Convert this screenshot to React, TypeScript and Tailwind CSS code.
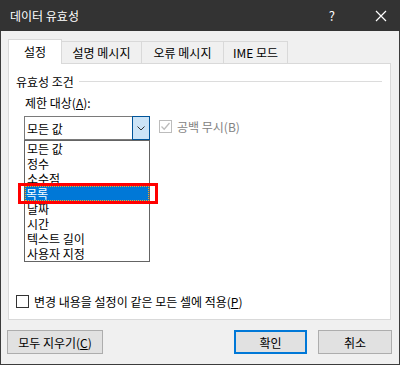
import React from "react"

const font = { fontFamily: '"Noto Sans CJK KR", "Noto Sans", sans-serif' }

const items = ["모든 값", "정수", "소수점", "목록", "날짜", "시간", "텍스트 길이", "사용자 지정"]

function Tab({ label, active }: { label: string; active?: boolean }) {
  if (active) {
    return (
      <div className="relative z-10 -mb-px flex h-[25px] w-[54px] items-center justify-center border border-b-0 border-[#d9d9d9] bg-white pb-[2px]">
        {label}
      </div>
    )
  }
  return (
    <div className="-ml-px flex h-[22px] items-center justify-center border border-b-0 border-[#d9d9d9] bg-[#f0f0f0] px-[10px] first:ml-0">
      {label}
    </div>
  )
}

export default function App() {
  return (
    <div
      className="flex h-[365px] w-[400px] flex-col border-x border-b border-[#3c3c3c] bg-[#f0f0f0] text-[12px] leading-[15px] text-black"
      style={font}
    >
      {/* Title bar */}
      <div className="-mx-px flex h-[31px] shrink-0 items-center bg-[#333333] text-white">
        <span className="ml-[10px] text-[12px]">데이터 유효성</span>
        <span className="ml-auto mr-[40px] text-[13px]">?</span>
        <svg width="12" height="12" viewBox="0 0 12 12" className="mr-[13px]">
          <path d="M1 1 L11 11 M11 1 L1 11" stroke="white" strokeWidth="1.2" />
        </svg>
      </div>

      {/* Tabs */}
      <div className="ml-[7px] mt-[8px] flex h-[24px] items-end">
        <Tab label="설정" active />
        <div className="-ml-px flex h-[22px] w-[81px] items-center justify-center border border-b-0 border-[#d9d9d9]">
          설명 메시지
        </div>
        <div className="-ml-px flex h-[22px] w-[83px] items-center justify-center border border-b-0 border-[#d9d9d9]">
          오류 메시지
        </div>
        <div className="-ml-px flex h-[22px] w-[65px] items-center justify-center border border-b-0 border-[#d9d9d9]">
          IME 모드
        </div>
      </div>

      {/* Panel */}
      <div className="ml-[7px] mr-[8px] flex h-[257px] flex-col border border-[#d9d9d9] bg-white pl-[7px]">
        <div className="mt-[10px] flex h-[15px] items-center">
          <span>유효성 조건</span>
          <div className="ml-[5px] mr-[8px] h-px flex-1 bg-[#dcdcdc]" />
        </div>
        <div className="ml-[9px] mt-[6px] h-[15px]">
          제한 대상(<span className="underline">A</span>):
        </div>
        <div className="ml-[8px] mt-[6px] flex items-start">
          <div className="relative">
            <div className="flex h-[24px] w-[126px] items-center border border-[#7a7a7a] bg-white">
              <span className="ml-[2px] flex-1">모든 값</span>
              <div className="-my-px -mr-px flex h-[24px] w-[18px] items-center justify-center border border-[#005499] bg-[#cce4f7]">
                <svg width="8" height="5" viewBox="0 0 8 5">
                  <path d="M0.5 0.5 L4 4 L7.5 0.5" fill="none" stroke="#333" strokeWidth="1" />
                </svg>
              </div>
            </div>
            {/* Dropdown list */}
            <div className="absolute left-0 top-[24px] z-20 h-[122px] w-[126px] border border-[#646464] bg-white">
              {items.map((it) => (
                <div
                  key={it}
                  className={
                    it === "목록"
                      ? "flex h-[15px] items-center bg-[#0078d7] pl-[1px] text-white outline outline-1 -outline-offset-1 outline-dotted outline-[#f5a623]"
                      : "flex h-[15px] items-center pl-[2px]"
                  }
                >
                  {it}
                </div>
              ))}
              <div className="absolute left-[-7px] top-[42px] h-[21px] w-[140px] border-[3px] border-[#ff0000]" />
            </div>
          </div>
          <div className="ml-[9px] mt-[3px] flex items-center">
            <div className="flex h-[13px] w-[13px] items-center justify-center border border-[#bcbcbc] bg-white">
              <svg width="11" height="11" viewBox="0 0 11 11">
                <path d="M1.5 5.5 L4.2 8.2 L9.5 2" fill="none" stroke="#bcbcbc" strokeWidth="1.3" />
              </svg>
            </div>
            <span className="ml-[5px] text-[#838383]">공백 무시(B)</span>
          </div>
        </div>
        <div className="mb-[10px] mt-auto flex items-center">
          <div className="h-[13px] w-[13px] border border-[#333333] bg-white" />
          <span className="ml-[5px]">
            변경 내용을 설정이 같은 모든 셀에 적용(<span className="underline">P</span>)
          </span>
        </div>
      </div>

      {/* Buttons */}
      <div className="mt-[10px] flex">
        <div className="ml-[6px] flex h-[24px] w-[96px] items-center justify-center border border-[#adadad] bg-[#e1e1e1]">
          모두 지우기(<span className="underline">C</span>)
        </div>
        <div className="ml-auto flex h-[24px] w-[73px] items-center justify-center border-2 border-[#0078d7] bg-[#e1e1e1]">
          확인
        </div>
        <div className="ml-[11px] mr-[7px] flex h-[24px] w-[74px] items-center justify-center border border-[#adadad] bg-[#e1e1e1]">
          취소
        </div>
      </div>
    </div>
  )
}
